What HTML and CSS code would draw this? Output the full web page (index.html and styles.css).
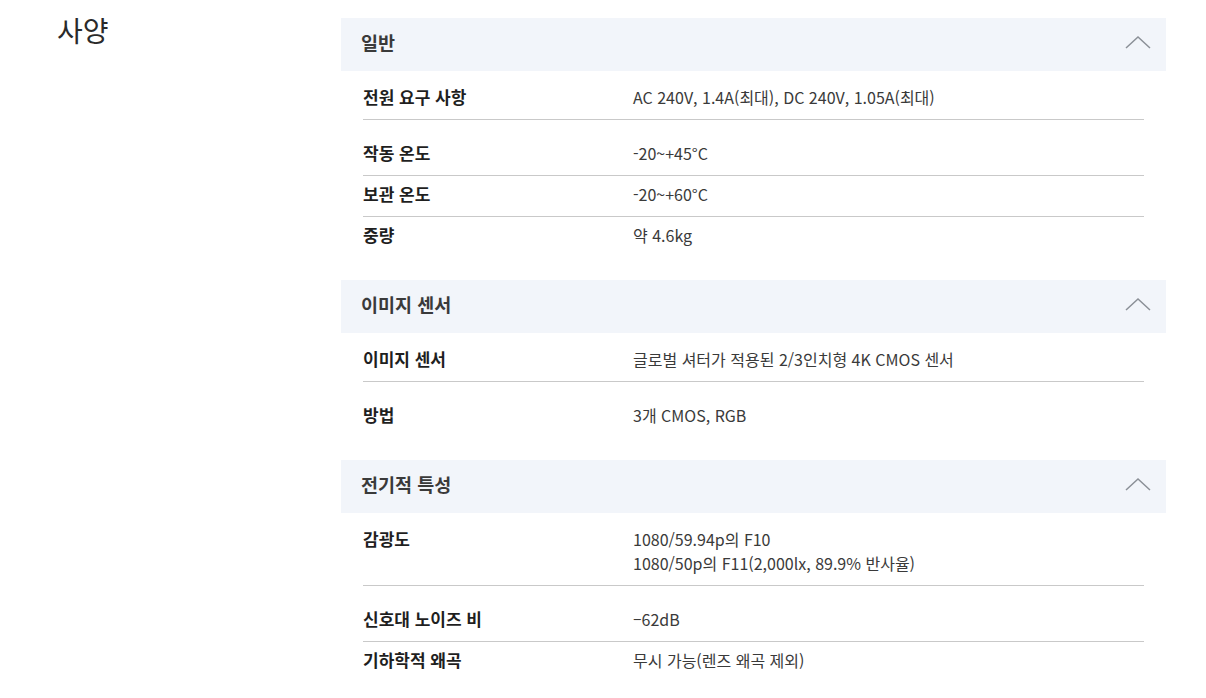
FILE: index.html
```html
<!DOCTYPE html>
<html lang="ko">

<head>
    <meta charset="UTF-8">
    <meta name="viewport" content="width=device-width, initial-scale=1.0">
    <title>사양</title>

    <link rel="stylesheet" href="styles.css">

</head>

<body>
    <div class="spec-page">
        <h2 class="spec-title">사양</h2>

        <div class="spec-list">
            <div class="spec-group">
                <div class="group-head">
                    <span>일반</span>
                    <svg class="chevron" width="26" height="14" viewBox="0 0 26 14">
                        <path d="M1 13 L13 2 L25 13" />
                    </svg>
                </div>
                <div class="group-body">
                    <div class="spec-row first">
                        <div class="spec-name">전원 요구 사항</div>
                        <div class="spec-value">AC 240V, 1.4A(최대), DC 240V, 1.05A(최대)</div>
                    </div>
                    <div class="spec-row tall">
                        <div class="spec-name">작동 온도</div>
                        <div class="spec-value">-20~+45°C</div>
                    </div>
                    <div class="spec-row">
                        <div class="spec-name">보관 온도</div>
                        <div class="spec-value">-20~+60°C</div>
                    </div>
                    <div class="spec-row">
                        <div class="spec-name">중량</div>
                        <div class="spec-value">약 4.6kg</div>
                    </div>
                </div>
            </div>

            <div class="spec-group">
                <div class="group-head">
                    <span>이미지 센서</span>
                    <svg class="chevron" width="26" height="14" viewBox="0 0 26 14">
                        <path d="M1 13 L13 2 L25 13" />
                    </svg>
                </div>
                <div class="group-body">
                    <div class="spec-row first">
                        <div class="spec-name">이미지 센서</div>
                        <div class="spec-value">글로벌 셔터가 적용된 2/3인치형 4K CMOS 센서</div>
                    </div>
                    <div class="spec-row tall">
                        <div class="spec-name">방법</div>
                        <div class="spec-value">3개 CMOS, RGB</div>
                    </div>
                </div>
            </div>

            <div class="spec-group">
                <div class="group-head">
                    <span>전기적 특성</span>
                    <svg class="chevron" width="26" height="14" viewBox="0 0 26 14">
                        <path d="M1 13 L13 2 L25 13" />
                    </svg>
                </div>
                <div class="group-body">
                    <div class="spec-row first">
                        <div class="spec-name">감광도</div>
                        <div class="spec-value">1080/59.94p의 F10<br>1080/50p의 F11(2,000lx, 89.9% 반사율)</div>
                    </div>
                    <div class="spec-row tall">
                        <div class="spec-name">신호대 노이즈 비</div>
                        <div class="spec-value">–62dB</div>
                    </div>
                    <div class="spec-row">
                        <div class="spec-name">기하학적 왜곡</div>
                        <div class="spec-value">무시 가능(렌즈 왜곡 제외)</div>
                    </div>
                </div>
            </div>
        </div>
    </div>
</body>

</html>
```

FILE: styles.css
```css
body {
    margin: 0;
    background: #fff;
    color: #222;
    font-family: "Noto Sans CJK KR", "Noto Sans", sans-serif;
}

.spec-page {
    display: flex;
    padding-top: 18px;
}

.spec-title {
    width: 284px;
    margin: -2px 0 0;
    padding-left: 57px;
    font-size: 28px;
    font-weight: 400;
    line-height: 28px;
    color: #2a2a2a;
}

.spec-list {
    width: 825px;
}

.spec-group {
    margin-bottom: 23px;
}

.group-head {
    height: 53px;
    display: flex;
    align-items: center;
    justify-content: space-between;
    padding: 0 15px 5px 20px;
    box-sizing: border-box;
    background: #f2f5fa;
    font-size: 18.5px;
    font-weight: 700;
    color: #3a3a3a;
}

.chevron path {
    fill: none;
    stroke: #8b9097;
    stroke-width: 1.5;
}

.group-body {
    padding: 0 22px;
}

.spec-row {
    display: flex;
    padding: 6px 0 10px;
    border-top: 1px solid #c9c9c9;
    line-height: 24px;
}

.spec-row.first {
    border-top: none;
    padding-top: 14px;
}

.spec-row.tall {
    padding-top: 21px;
}

.spec-name {
    width: 270px;
    flex: none;
    font-size: 17px;
    font-weight: 700;
    color: #1f1f1f;
}

.spec-value {
    font-size: 16px;
    color: #3a3a3a;
}
```
